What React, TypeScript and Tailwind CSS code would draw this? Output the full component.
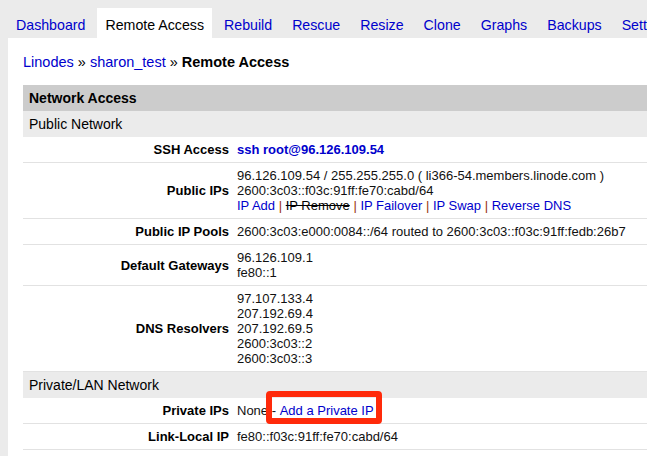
import React from "react";

const tabs = ["Dashboard", "Remote Access", "Rebuild", "Rescue", "Resize", "Clone", "Graphs", "Backups", "Settings"];

function Pipe() {
  return <span className="text-[#993311]"> | </span>;
}

function Row({ label, children }: { label: string; children: React.ReactNode }) {
  return (
    <div className="grid grid-cols-[214px_1fr] border-b border-[#e2e2e2] py-[5px]">
      <div className="flex items-center justify-end pr-2 font-bold text-[13px] leading-[15px] text-black">{label}</div>
      <div className="text-[13px] leading-[15px] text-[#111]">{children}</div>
    </div>
  );
}

export default function App() {
  return (
    <div className="w-[647px] h-[456px] overflow-hidden bg-[#ebebeb] font-['Liberation_Sans',Arial,sans-serif]">
      <div className="flex h-[38px] items-end gap-1 pl-2 whitespace-nowrap">
        {tabs.map((t) => (
          <div
            key={t}
            className={
              t === "Remote Access"
                ? "h-[30px] px-2 pt-[6px] flex items-center text-[14.2px] bg-white text-black"
                : "h-[30px] px-2 pt-[6px] flex items-center text-[14.2px] text-[#0000cc]"
            }
          >
            {t}
          </div>
        ))}
      </div>
      <div className="ml-2 w-[720px] h-[418px] bg-white pl-[15px] pt-[16px]">
        <div className="text-[14.5px] leading-[17px] text-black">
          <span className="text-[#0000cc]">Linodes</span> » <span className="text-[#0000cc]">sharon_test</span> »{" "}
          <span className="font-bold">Remote Access</span>
        </div>
        <div className="mt-[14px]">
          <div className="h-[26px] flex items-center pl-[6px] bg-[#cccccc] font-bold text-[14px] text-black">Network Access</div>
          <div className="h-[26px] flex items-center pl-[6px] bg-[#ebebeb] text-[14px] text-black">Public Network</div>
          <Row label="SSH Access">
            <span className="font-bold text-[#0000cc]">ssh root@96.126.109.54</span>
          </Row>
          <Row label="Public IPs">
            <div>96.126.109.54 / 255.255.255.0 ( li366-54.members.linode.com )</div>
            <div>2600:3c03::f03c:91ff:fe70:cabd/64</div>
            <div>
              <span className="text-[#0000cc]">IP Add</span>
              <Pipe />
              <span className="line-through text-black">IP Remove</span>
              <Pipe />
              <span className="text-[#0000cc]">IP Failover</span>
              <Pipe />
              <span className="text-[#0000cc]">IP Swap</span>
              <Pipe />
              <span className="text-[#0000cc]">Reverse DNS</span>
            </div>
          </Row>
          <Row label="Public IP Pools">2600:3c03:e000:0084::/64 routed to 2600:3c03::f03c:91ff:fedb:26b7</Row>
          <Row label="Default Gateways">
            <div>96.126.109.1</div>
            <div>fe80::1</div>
          </Row>
          <Row label="DNS Resolvers">
            <div>97.107.133.4</div>
            <div>207.192.69.4</div>
            <div>207.192.69.5</div>
            <div>2600:3c03::2</div>
            <div>2600:3c03::3</div>
          </Row>
          <div className="h-[26px] flex items-center pl-[6px] bg-[#ebebeb] text-[14px] text-black">Private/LAN Network</div>
          <Row label="Private IPs">
            None -{" "}
            <span className="relative inline-block">
              <span className="text-[#0000cc]">Add a Private IP</span>
              <span className="absolute left-[-14px] right-[-8px] top-[-12px] bottom-[-6px] border-[6px] border-[#ff2a0a] rounded-[4px]"></span>
            </span>
          </Row>
          <Row label="Link-Local IP">fe80::f03c:91ff:fe70:cabd/64</Row>
        </div>
      </div>
    </div>
  );
}
